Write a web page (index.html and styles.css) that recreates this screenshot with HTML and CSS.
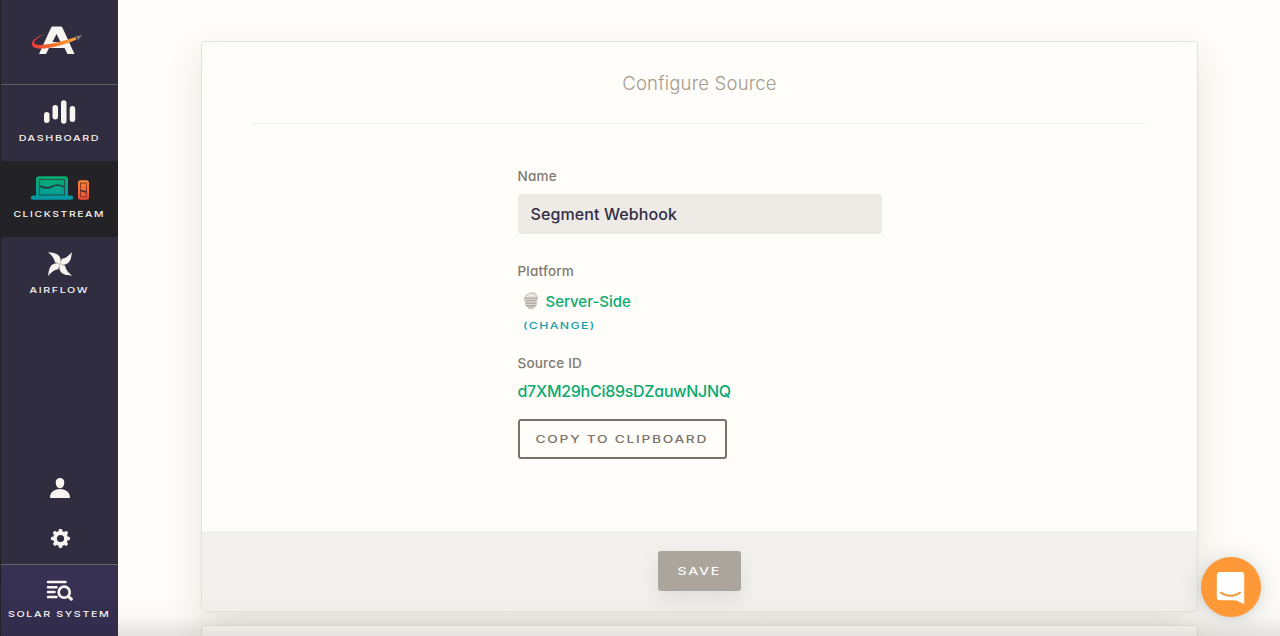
FILE: index.html
```html
<!DOCTYPE html>
<html lang="en">
<head>
<meta charset="utf-8">
<title>Configure Source</title>
<link rel="stylesheet" href="styles.css">
</head>
<body>
<div class="app">
  <nav class="sidebar">
    <a class="logo">
      <svg width="52" height="32" viewBox="0 0 52 32">
        <defs><linearGradient id="orbit" gradientUnits="userSpaceOnUse" x1="0" x2="46"><stop offset="0" stop-color="#e8343a"/><stop offset=".5" stop-color="#f4762f"/><stop offset="1" stop-color="#ffa63c"/></linearGradient></defs>
        <path fill="#f8f4f0" fill-rule="evenodd" d="M22 1.500h7.500c1 0 1.500.4 2 1.300L43.500 29h-7l-3-6H18l-3 6H8L20 2.800c.5-.9 1-1.300 2-1.300zM25.500 9l-4 8h8z"/>
        <path fill="url(#orbit)" d="M15 8.500C4 12 -1 17 1.500 21c3 5 23 2.800 44-6.500l-1.200-2.500C26 18.500 6 22 3.500 18.500 2 16 7 12 15 8.500z"/>
        <path fill="#8b8580" d="M43.800 11.500l7.400-1.300-4.700 5.300-.3-3.200z"/>
      </svg>
    </a>
    <a class="item">
      <svg class="icon" width="32" height="24" viewBox="0 0 32 24" fill="#f8f4f0"><rect x="0" y="12" width="5.500" height="11" rx="2.700"/><rect x="8.500" y="5" width="5.500" height="14.500" rx="2.700"/><rect x="17" y=".3" width="5.500" height="23.500" rx="2.700"/><rect x="25.700" y="6" width="5.500" height="16" rx="2.700"/></svg>
      <span class="label wide">Dashboard</span>
    </a>
    <a class="item active">
      <svg class="icon" width="58" height="24" viewBox="0 0 58 24">
        <defs><linearGradient id="laptop" x2="0" y2="1"><stop offset="0" stop-color="#08ae70"/><stop offset="1" stop-color="#0398a8"/></linearGradient><linearGradient id="phone" x2="0" y2="1"><stop offset="0" stop-color="#ff8935"/><stop offset="1" stop-color="#f04b36"/></linearGradient></defs>
        <path fill="url(#laptop)" d="M8 .3h26a3 3 0 0 1 3 3V19.500h3a2 2 0 0 1 0 4.300H2a2 2 0 0 1 0-4.300h3V3.300a3 3 0 0 1 3-3z"/>
        <rect x="8.500" y="3.500" width="25" height="15.500" fill="none" stroke="#225b4e" stroke-width="1.200"/>
        <path d="M9 10c4 2.500 8 2.500 12 .4s8-2 12.500 1" fill="none" stroke="#26363b" stroke-width="1.700"/>
        <rect x="47" y="4.300" width="11" height="19.500" rx="2.500" fill="url(#phone)"/>
        <rect x="49.600" y="7" width="5.800" height="13.800" fill="none" stroke="#8a3c2b" stroke-width="1.100"/>
        <path d="M49.500 14.500c3 0 3 1.500 6 1.500" fill="none" stroke="#40302f" stroke-width="1.500"/>
      </svg>
      <span class="label wide clickstream">Clickstream</span>
    </a>
    <a class="item">
      <svg class="icon" width="24" height="24" viewBox="0 0 24 24">
        <defs><path id="blade" d="M0 .3C5 .4 9.500 1.500 11.500 4.500c1.300 2.200 1.500 5 .9 7.700L6.800 10C6.300 6 3.500 3 0 .3z"/></defs>
        <g fill="#f8f4f0"><use href="#blade"/><use href="#blade" transform="rotate(90 12 12)"/><use href="#blade" transform="rotate(180 12 12)"/><use href="#blade" transform="rotate(270 12 12)"/></g>
        <path d="M7.500 10.500l4.500 1.500 1.500-4.500M16.500 13.500L12 12l-1.500 4.500" fill="none" stroke="#d0c9c1" stroke-width=".9"/>
      </svg>
      <span class="label wide">Airflow</span>
    </a>
    <div class="tools">
      <a><svg width="20" height="20" viewBox="0 0 20 20" fill="#f8f4f0"><path d="M10 0c2.700 0 4.300 1.700 4.300 4.200 0 3-1.600 6-4.300 6s-4.300-3-4.300-6C5.700 1.700 7.300 0 10 0zM0 19.300C0 14 5 11 10 11s10 3 10 8.300c0 .5-.3.700-.7.700H.7c-.4 0-.7-.2-.7-.7z"/></svg></a>
      <a class="gear"><svg width="20" height="20" viewBox="0 0 20 20"><g fill="#f8f4f0"><circle cx="10.500" cy="10.500" r="7.400"/><g id="teeth"><rect x="8.700" y=".9" width="3.600" height="19.100" rx="1.300"/><rect x=".9" y="8.700" width="19.100" height="3.600" rx="1.300"/></g><use href="#teeth" transform="rotate(45 10.500 10.500)"/></g><circle cx="10.500" cy="10.500" r="3.600" fill="#312d41"/></svg></a>
    </div>
    <a class="solar">
      <svg width="28" height="21" viewBox="0 0 28 21" fill="none" stroke="#f8f4f0" stroke-linecap="round"><path stroke-width="2.500" d="M2 2h17.500M2 7.200h8.500M2 12h6.500M2 17h8.500"/><circle cx="18.200" cy="12.200" r="5.500" stroke-width="2.700"/><path stroke-width="3" d="M22.500 16.500l2.800 2.700"/></svg>
      <span class="label wide">Solar System</span>
    </a>
  </nav>
  <main class="content">
    <section class="card">
      <header class="card-head"><h1>Configure Source</h1></header>
      <div class="form">
        <label class="caption name">Name</label>
        <div class="field">Segment Webhook</div>
        <div class="caption platform">Platform</div>
        <div class="server">
          <svg width="14" height="17" viewBox="0 0 14 17"><path d="M1 6C1 3 3 2.500 4.500 2 7 .3 12 0 12.500 4c1.500 1 1 3.500 0 4.500L12 14c-2 1.500-8 1.500-10 0L1.500 9C0 8 0 6.500 1 6z" fill="#dedad5" stroke="#b8b1a9" stroke-width=".8"/><path d="M1 6.300h12M2 8.700h10M2 11.200h10M2.500 13.700h9M4 16h6" stroke="#a39c94" stroke-width="1"/><path d="M3 4.800c2-1.800 5-2.300 8-1.800" stroke="#f4f1ed" stroke-width="1.200" fill="none"/></svg>
          <span>Server-Side</span>
        </div>
        <a class="change"><span class="wide">(Change)</span></a>
        <div class="caption source">Source ID</div>
        <div class="source-id">d7XM29hCi89sDZauwNJNQ</div>
        <button class="copy"><span class="wide">Copy to clipboard</span></button>
      </div>
      <footer class="card-foot"><button class="save"><span class="wide">Save</span></button></footer>
    </section>
    <section class="card next"></section>
  </main>
  <div class="fade"></div>
  <button class="chat"><svg width="30" height="34" viewBox="0 0 30 34"><path fill="#fff" d="M4 1h21a3.200 3.200 0 0 1 3.200 3.200V33c-4-1-6-3.500-10-3.700H4A3.200 3.200 0 0 1 .8 26V4.200A3.200 3.200 0 0 1 4 1z"/><path d="M5 21.500c5 4.200 14 4.200 19 0" fill="none" stroke="#f39438" stroke-width="2" stroke-linecap="round"/></svg></button>
</div>
</body>
</html>
```
FILE: styles.css
```css
* { box-sizing: border-box; }
body { margin: 0; background: #fefdf9; font-family: Inter, "Liberation Sans", sans-serif; font-feature-settings: "cv11"; }
button { font: inherit; padding: 0; cursor: pointer; }
svg { display: block; }
.app { position: relative; display: flex; height: 636px; overflow: hidden; }
.wide { display: block; white-space: nowrap; text-transform: uppercase; transform: scaleX(1.34); }

.sidebar { display: flex; flex-direction: column; width: 118px; flex: none; background: #312d41; border-left: 1px solid #222126; }
.logo { height: 85px; padding: 25px 0 0 30px; border-bottom: 1px solid #5f5d60; }
.item { display: flex; flex-direction: column; align-items: center; height: 76px; padding-top: 15px; }
.active { background: #232227; }
.label { margin-top: 9px; font-size: 8px; font-weight: 500; line-height: 10px; letter-spacing: 1.200px; color: #f8f4f0; }
.label.clickstream { transform: scaleX(1.3); }
.item .icon { flex: none; }
.active .icon { margin-left: 1px; }
.tools { display: flex; flex-direction: column; align-items: center; gap: 30px; margin-top: auto; padding-bottom: 16px; }
.solar { display: flex; flex-direction: column; align-items: center; height: 72px; padding-top: 15px; background: linear-gradient(#373154, #332d4c); border-top: 1px solid #66626a; }
.solar .label { margin-top: 8px; }

.content { flex: 1; padding: 41px 82px 0 83px; }
.card { display: flex; flex-direction: column; height: 571px; background: #fefdf9; border: 1px solid #e4e2df; border-radius: 4px; box-shadow: 0 15px 35px rgba(60, 50, 40, .12); }
.card-head { height: 82px; margin: 0 50px 0 49px; border-bottom: 1px solid #f1f0ed; text-align: center; }
h1 { margin: 0; padding: 28px 0 0 1px; font-size: 18.500px; line-height: 26px; font-weight: 300; letter-spacing: .200px; color: #a49a8d; }
.form { display: flex; flex-direction: column; width: 364px; flex: 1; align-self: center; }
.caption { font-size: 13.500px; line-height: 18px; font-weight: 500; letter-spacing: .200px; color: #817970; }
.name { margin-top: 43px; }
.field { height: 40px; margin-top: 9px; padding-left: 13px; border-radius: 3px; background: #eeebe7; font-size: 16px; line-height: 40px; font-weight: 500; letter-spacing: .100px; color: #312d45; }
.platform { margin-top: 28px; }
.server { display: flex; align-items: center; gap: 8px; height: 22px; margin-top: 10px; padding-left: 6px; font-size: 15px; font-weight: 500; color: #0aaa70; }
.server svg { margin-top: -1px; }
.change { display: flex; margin: 8px 0 0 5px; font-size: 9.500px; line-height: 12px; font-weight: 500; letter-spacing: 1px; color: #10a0ab; }
.change .wide { transform: scaleX(1.3); transform-origin: left; }
.source { margin-top: 22px; }
.source-id { margin-top: 8px; font-size: 16px; line-height: 22px; font-weight: 500; letter-spacing: -.280px; color: #0aaa70; }
.copy { display: flex; align-items: center; justify-content: center; width: 209px; height: 40px; margin-top: 17px; border: 2px solid #7b7269; border-radius: 3px; background: none; color: #7b7269; font-size: 10.500px; font-weight: 500; letter-spacing: 1.300px; }
.copy .wide { transform: scaleX(1.31); }
.card-foot { display: flex; justify-content: center; height: 80px; padding-top: 20px; background: #f2f1ee; border-radius: 0 0 3px 3px; }
.save { display: flex; align-items: center; justify-content: center; width: 83px; height: 40px; border: 0; border-radius: 3px; background: #aba59d; box-shadow: 0 8px 20px rgba(60, 50, 40, .1); color: #fcfaf6; font-size: 10.500px; font-weight: 500; letter-spacing: 1.300px; }
.next { height: 60px; margin-top: 13px; }
.fade { position: absolute; left: 118px; right: 0; bottom: 0; height: 40px; pointer-events: none; background: linear-gradient(rgba(60, 55, 50, 0), rgba(60, 55, 50, .02) 50%, rgba(60, 55, 50, .14)); }
.chat { position: absolute; right: 19px; bottom: 19px; display: flex; align-items: center; justify-content: center; width: 60px; height: 60px; padding-top: 2px; border: 0; border-radius: 50%; background: #ff9938; box-shadow: 0 1px 6px rgba(0, 0, 0, .08), 0 2px 26px rgba(0, 0, 0, .14); }
```
